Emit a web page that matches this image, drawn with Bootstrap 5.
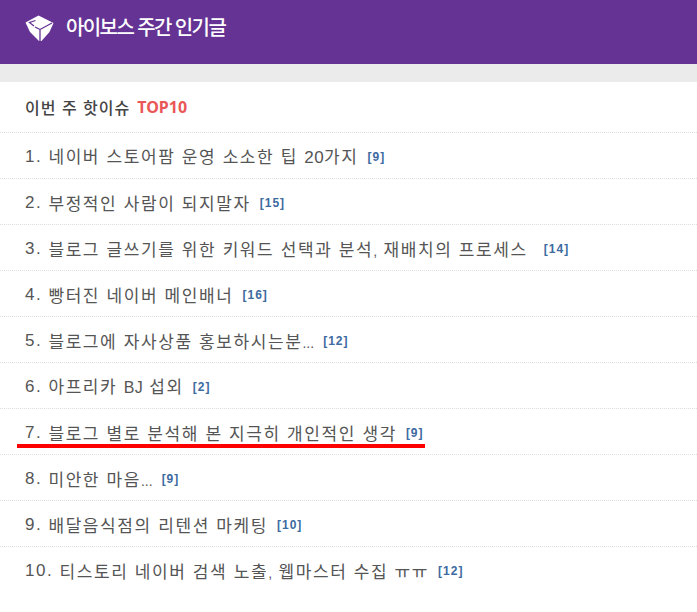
<!DOCTYPE html>
<html lang="ko">
<head>
<meta charset="utf-8">
<title>아이보스 주간 인기글</title>
<link href="https://cdn.jsdelivr.net/npm/bootstrap@5.3.0/dist/css/bootstrap.min.css" rel="stylesheet">
<style>
html,body{background:#fff;font-family:"Noto Sans CJK KR","Liberation Sans",sans-serif;overflow:hidden}
.top-bar{height:64px;background:#643394;padding-left:25px;gap:12px}
.top-logo{margin-bottom:8px}
.top-title{color:#fff;font-size:20px;font-weight:500;letter-spacing:-1.6px;line-height:1;margin:0 0 10px}
.gap-band{height:18px;background:#ebebeb}
.hot-head{height:51px;padding:0 0 0 25px;font-size:16px;font-weight:500;color:#444;border-bottom:1px dotted #ddd;letter-spacing:1px;gap:7px}
.hot-head b{color:#e95757;font-family:"Noto Sans","Liberation Sans",sans-serif;font-weight:700;font-size:16px;letter-spacing:0}
.hot-list{list-style:none;margin:0;padding:0}
.hot-row{height:46px;padding:2px 0 0 25px;border-bottom:1px dotted #ddd;font-size:17px;color:#555;letter-spacing:1.6px;white-space:nowrap;position:relative}
.hot-row:last-child{border-bottom:0}
.hot-num{font-family:"Liberation Sans",sans-serif;font-size:17px;letter-spacing:1.6px;margin-right:6px}
.hot-lat{font-family:"Liberation Sans",sans-serif;font-size:16px;letter-spacing:.3px}
.hot-fig{font-family:"Liberation Sans",sans-serif;font-size:17px;letter-spacing:.4px}
.hot-dot{font-family:"Liberation Sans",sans-serif;font-size:14px;letter-spacing:0}
.hot-cnt{font-family:"Liberation Sans",sans-serif;font-size:12px;font-weight:700;color:#3d6a9f;letter-spacing:1px;margin-left:9px}
.hot-mark{position:absolute;left:17px;top:35px;width:408px;height:4px;background:#f00}
</style>
</head>
<body>
<div class="top-bar d-flex align-items-center">
<svg class="top-logo" width="29" height="27" viewBox="0 0 29 27"><path fill="#fff" d="M13.500 .5 28.500 8 24.500 17 16.500 26 14 26 5 17 .5 7.500Z"/><path fill="none" stroke="#643394" stroke-width="1.300" d="M15 14.500V26M15 14.500 27 8M15 14.500 10 12M10.500 5.500 4.500 7.500 9 11"/></svg>
<h1 class="top-title">아이보스 주간 인기글</h1>
</div>
<div class="gap-band"></div>
<div class="hot-head d-flex align-items-center"><span>이번 주 핫이슈</span><b>TOP10</b></div>
<ul class="hot-list">
<li class="hot-row d-flex align-items-center"><span class="hot-num">1.</span><span>네이버 스토어팜 운영 소소한 팁 <span class="hot-fig">20</span>가지</span><span class="hot-cnt">[9]</span></li>
<li class="hot-row d-flex align-items-center"><span class="hot-num">2.</span><span>부정적인 사람이 되지말자</span><span class="hot-cnt">[15]</span></li>
<li class="hot-row d-flex align-items-center"><span class="hot-num">3.</span><span>블로그 글쓰기를 위한 키워드 선택과 분석<span class="hot-dot">,</span> 재배치의 프로세스</span><span class="hot-cnt ms-3">[14]</span></li>
<li class="hot-row d-flex align-items-center"><span class="hot-num">4.</span><span>빵터진 네이버 메인배너</span><span class="hot-cnt">[16]</span></li>
<li class="hot-row d-flex align-items-center"><span class="hot-num">5.</span><span>블로그에 자사상품 홍보하시는분<span class="hot-dot">...</span></span><span class="hot-cnt">[12]</span></li>
<li class="hot-row d-flex align-items-center"><span class="hot-num">6.</span><span>아프리카 <span class="hot-lat">BJ</span> 섭외</span><span class="hot-cnt">[2]</span></li>
<li class="hot-row d-flex align-items-center"><span class="hot-num">7.</span><span>블로그 별로 분석해 본 지극히 개인적인 생각</span><span class="hot-cnt">[9]</span><i class="hot-mark"></i></li>
<li class="hot-row d-flex align-items-center"><span class="hot-num">8.</span><span>미안한 마음<span class="hot-dot">...</span></span><span class="hot-cnt">[9]</span></li>
<li class="hot-row d-flex align-items-center"><span class="hot-num">9.</span><span>배달음식점의 리텐션 마케팅</span><span class="hot-cnt">[10]</span></li>
<li class="hot-row d-flex align-items-center"><span class="hot-num">10.</span><span>티스토리 네이버 검색 노출<span class="hot-dot">,</span> 웹마스터 수집 ㅠㅠ</span><span class="hot-cnt">[12]</span></li>
</ul>
<script src="https://cdn.jsdelivr.net/npm/bootstrap@5.3.0/dist/js/bootstrap.bundle.min.js"></script>
</body>
</html>
